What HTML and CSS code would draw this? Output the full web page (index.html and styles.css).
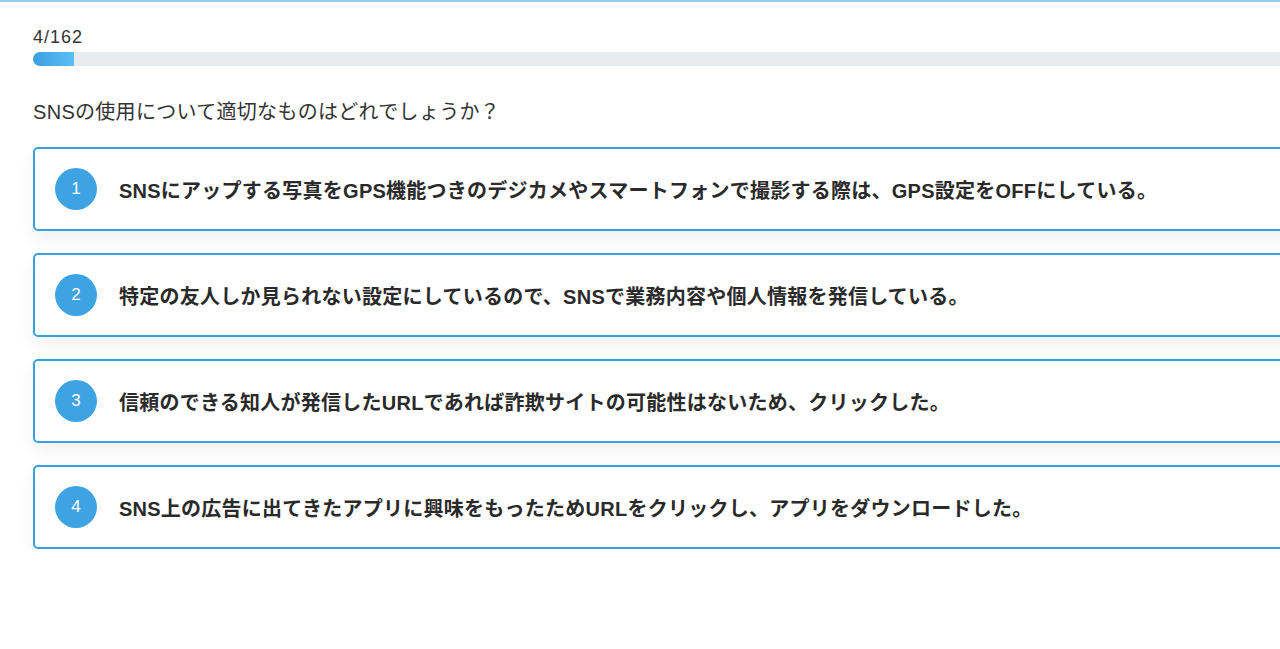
FILE: index.html
```html
<!DOCTYPE html>
<html lang="ja">
<head>
    <meta charset="UTF-8">
    <meta name="viewport" content="width=device-width, initial-scale=1.0">
    <title>クイズ</title>
    <link rel="stylesheet" href="styles.css">
</head>
<body>

    <div id="quiz">
        <div id="progress-label">4/162</div>
        <div id="progress-track"><div id="progress-fill" style="width: 41px;"></div></div>

        <p id="question">SNSの使用について適切なものはどれでしょうか？</p>

        <div id="choices">
            <div class="choice">
                <span class="num">1</span>
                <span class="choice-text">SNSにアップする写真をGPS機能つきのデジカメやスマートフォンで撮影する際は、GPS設定をOFFにしている。</span>
            </div>
            <div class="choice">
                <span class="num">2</span>
                <span class="choice-text">特定の友人しか見られない設定にしているので、SNSで業務内容や個人情報を発信している。</span>
            </div>
            <div class="choice">
                <span class="num">3</span>
                <span class="choice-text">信頼のできる知人が発信したURLであれば詐欺サイトの可能性はないため、クリックした。</span>
            </div>
            <div class="choice">
                <span class="num">4</span>
                <span class="choice-text">SNS上の広告に出てきたアプリに興味をもったためURLをクリックし、アプリをダウンロードした。</span>
            </div>
        </div>
    </div>

</body>
</html>
```

FILE: styles.css
```css
body {
    font-family: 'Liberation Sans', 'Noto Sans CJK JP', sans-serif;
    color: #2b2b2b;
    background: white;
    margin: 0;
    padding: 0;
    overflow: hidden;
    border-top: 2px solid #92cdec;
}
#quiz {
    width: 1280px;
    padding: 25px 0 0 33px;
}
#progress-label {
    font-size: 18px;
    line-height: 20px;
    letter-spacing: 1px;
    color: #333;
}
#progress-track {
    margin-top: 5px;
    height: 14px;
    background: #e9ecee;
    border-radius: 7px 0 0 7px;
}
#progress-fill {
    height: 100%;
    border-radius: 7px 0 0 7px;
    background: linear-gradient(to right, #3a9ee0, #5cbff6);
}
#question {
    margin: 34px 0 0 0;
    font-size: 20px;
    line-height: 24px;
    letter-spacing: 0.3px;
    color: #333;
}
#choices {
    margin-top: 23px;
    display: flex;
    flex-direction: column;
    gap: 22px;
}
.choice {
    display: flex;
    align-items: center;
    gap: 22px;
    height: 80px;
    padding-left: 20px;
    border: 2px solid #3a9fdf;
    border-radius: 5px;
    background: white;
    box-shadow: 0 8px 18px rgba(0, 0, 0, 0.06);
}
.num {
    flex: none;
    width: 42px;
    height: 42px;
    border-radius: 50%;
    background: #3ea3e2;
    color: white;
    font-size: 17px;
    display: flex;
    align-items: center;
    justify-content: center;
}
.choice-text {
    font-size: 20px;
    font-weight: bold;
    letter-spacing: 0.25px;
    color: #2a2a2a;
    white-space: nowrap;
}
```
